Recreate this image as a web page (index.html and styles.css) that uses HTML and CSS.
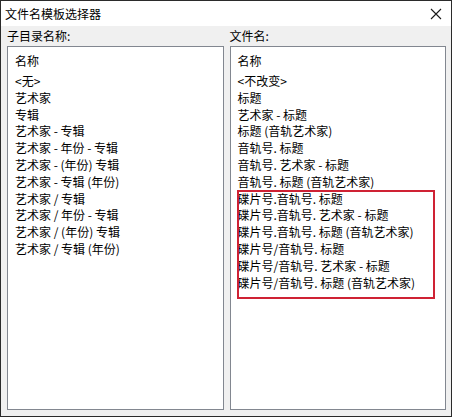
FILE: index.html
```html
<!DOCTYPE html>
<html lang="zh-CN">
<head>
    <meta charset="UTF-8">
    <title>文件名模板选择器</title>
    <link rel="stylesheet" href="styles.css">
</head>
<body>

    <div class="window">
        <div class="titlebar">
            <span class="title">文件名模板选择器</span>
            <svg class="close" width="12" height="12" viewBox="0 0 12 12">
                <path d="M1 1 L11 11 M11 1 L1 11" stroke="#1a1a1a" stroke-width="1.1" fill="none"/>
            </svg>
        </div>

        <div class="panes">
            <div class="pane">
                <div class="label">子目录名称:</div>
                <div class="listbox">
                    <div class="list-header">名称</div>
                    <ul class="items">
                        <li>&lt;无&gt;</li>
                        <li>艺术家</li>
                        <li>专辑</li>
                        <li>艺术家 - 专辑</li>
                        <li>艺术家 - 年份 - 专辑</li>
                        <li>艺术家 - (年份) 专辑</li>
                        <li>艺术家 - 专辑 (年份)</li>
                        <li>艺术家 / 专辑</li>
                        <li>艺术家 / 年份 - 专辑</li>
                        <li>艺术家 / (年份) 专辑</li>
                        <li>艺术家 / 专辑 (年份)</li>
                    </ul>
                </div>
            </div>

            <div class="pane">
                <div class="label">文件名:</div>
                <div class="listbox">
                    <div class="list-header">名称</div>
                    <ul class="items">
                        <li>&lt;不改变&gt;</li>
                        <li>标题</li>
                        <li>艺术家 - 标题</li>
                        <li>标题 (音轨艺术家)</li>
                        <li>音轨号. 标题</li>
                        <li>音轨号. 艺术家 - 标题</li>
                        <li>音轨号. 标题 (音轨艺术家)</li>
                        <li>碟片号.音轨号. 标题</li>
                        <li>碟片号.音轨号. 艺术家 - 标题</li>
                        <li>碟片号.音轨号. 标题 (音轨艺术家)</li>
                        <li>碟片号/音轨号. 标题</li>
                        <li>碟片号/音轨号. 艺术家 - 标题</li>
                        <li>碟片号/音轨号. 标题 (音轨艺术家)</li>
                    </ul>
                    <!-- highlight drawn over the disc-number templates -->
                    <div class="highlight"></div>
                </div>
            </div>
        </div>
    </div>

</body>
</html>
```

FILE: styles.css
```css
/* Base styling */
body {
    margin: 0;
    padding: 0;
    font-family: 'Noto Sans CJK SC', 'Noto Sans', sans-serif;
    font-size: 12px;
    color: #000;
    background-color: #fff;
}

.window {
    width: 452px;
    height: 417px;
    box-sizing: border-box;
    border: 1px solid #2b2b2b;
    background-color: #f0f0f0;
    display: flex;
    flex-direction: column;
}

.titlebar {
    height: 25px;
    background-color: #fff;
    display: flex;
    align-items: center;
    justify-content: space-between;
    padding: 0 9px 0 4px;
}

.title {
    line-height: 25px;
}

.close {
    display: block;
}

.panes {
    flex: 1;
    display: grid;
    grid-template-columns: 1fr 1fr;
    gap: 6px;
    padding: 0 5px 6px 6px;
    min-height: 0;
}

.pane {
    display: flex;
    flex-direction: column;
    min-height: 0;
}

.label {
    height: 20px;
    line-height: 19px;
}

.listbox {
    position: relative;
    flex: 1;
    background-color: #fff;
    border: 1px solid #828790;
    padding-left: 7px;
    overflow: hidden;
}

.list-header {
    height: 26px;
    line-height: 27px;
}

.items {
    list-style: none;
    margin: 0;
    padding: 0;
}

.items li {
    height: 16.8px;
    line-height: 16.8px;
    white-space: nowrap;
}

.highlight {
    position: absolute;
    left: 6px;
    top: 143px;
    width: 194px;
    height: 105px;
    border: 2px solid #cf2234;
    pointer-events: none;
}
```
